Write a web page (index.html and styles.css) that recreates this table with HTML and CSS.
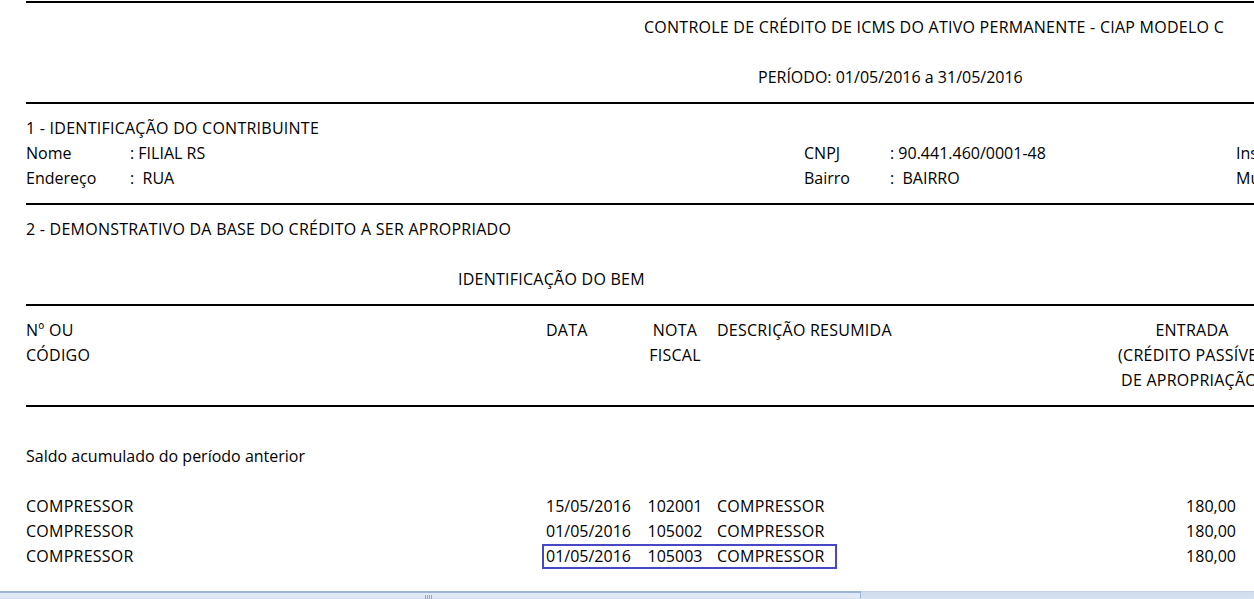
FILE: index.html
```html
<!DOCTYPE html>
<html lang="pt-BR">
<head>
    <meta charset="UTF-8">
    <title>CIAP Modelo C</title>
    <link rel="stylesheet" href="styles.css">
</head>
<body>
    <div class="viewport">
        <div class="report">
            <section class="band">
                <div class="row caps title">CONTROLE DE CRÉDITO DE ICMS DO ATIVO PERMANENTE - CIAP MODELO C</div>
                <div class="row"></div>
                <div class="row period">PERÍODO: 01/05/2016 a 31/05/2016</div>
            </section>

            <section class="band">
                <div class="row caps">1 - IDENTIFICAÇÃO DO CONTRIBUINTE</div>
                <div class="row ident">
                    <span>Nome</span>
                    <span>: FILIAL RS</span>
                    <span>CNPJ</span>
                    <span>: 90.441.460/0001-48</span>
                    <span>Inscrição Estadual</span>
                </div>
                <div class="row ident">
                    <span>Endereço</span>
                    <span>:&nbsp; RUA</span>
                    <span>Bairro</span>
                    <span>:&nbsp; BAIRRO</span>
                    <span>Município</span>
                </div>
            </section>

            <section class="band">
                <div class="row caps">2 - DEMONSTRATIVO DA BASE DO CRÉDITO A SER APROPRIADO</div>
                <div class="row"></div>
                <div class="row caps bem">IDENTIFICAÇÃO DO BEM</div>
            </section>

            <section class="band">
                <div class="head caps">
                    <div class="c-code">Nº OU<br>CÓDIGO</div>
                    <div class="c-date">DATA</div>
                    <div class="c-nota">NOTA<br>FISCAL</div>
                    <div class="c-desc">DESCRIÇÃO RESUMIDA</div>
                    <div class="c-gap"></div>
                    <div class="c-entrada">ENTRADA<br>(CRÉDITO PASSÍVEL<br>DE APROPRIAÇÃO)</div>
                </div>
            </section>

            <section class="band">
                <div class="row"></div>
                <div class="row">Saldo acumulado do período anterior</div>
                <div class="row"></div>

                <div class="row item">
                    <div class="c-code caps">COMPRESSOR</div>
                    <div class="cells">
                        <div class="c-date">15/05/2016</div>
                        <div class="c-nota">102001</div>
                        <div class="c-desc caps">COMPRESSOR</div>
                    </div>
                    <div class="c-gap"></div>
                    <div class="c-value">180,00</div>
                </div>
                <div class="row item">
                    <div class="c-code caps">COMPRESSOR</div>
                    <div class="cells">
                        <div class="c-date">01/05/2016</div>
                        <div class="c-nota">105002</div>
                        <div class="c-desc caps">COMPRESSOR</div>
                    </div>
                    <div class="c-gap"></div>
                    <div class="c-value">180,00</div>
                </div>
                <div class="row item">
                    <div class="c-code caps">COMPRESSOR</div>
                    <div class="cells selected">
                        <div class="c-date">01/05/2016</div>
                        <div class="c-nota">105003</div>
                        <div class="c-desc caps">COMPRESSOR</div>
                    </div>
                    <div class="c-gap"></div>
                    <div class="c-value">180,00</div>
                </div>
            </section>
        </div>
    </div>

    <div class="hscroll">
        <div class="thumb"><span class="grip"></span></div>
    </div>
</body>
</html>
```

FILE: styles.css
```css
:root {
    --ink: #000;
    --selection: #4848c6;
    --bar-edge: #9cb5d6;
    --thumb-bg: #dfe8f4;
    --track-bg: #cfdcec;
}

* {
    margin: 0;
    padding: 0;
    box-sizing: border-box;
}

html, body {
    height: 100%;
}

body {
    display: flex;
    flex-direction: column;
    background: #fff;
    color: var(--ink);
    font-family: 'Open Sans', 'Noto Sans', sans-serif;
    font-size: 16px;
    overflow: hidden;
}

.viewport {
    flex: 1;
    overflow: hidden;
}

.report {
    width: 1500px;
    padding: 1px 0 0 26px;
}

.band {
    border-top: 2px solid var(--ink);
    padding: 12px 0;
}

.row {
    height: 25px;
    line-height: 25px;
    white-space: nowrap;
}

.caps {
    letter-spacing: 0.25px;
}

.title {
    padding-left: 618px;
}

.period {
    padding-left: 732px;
}

.bem {
    padding-left: 432px;
}

/* identificacao */
.ident {
    display: grid;
    grid-template-columns: 104px 674px 86px 346px auto;
}

/* tabela */
.head {
    display: flex;
    line-height: 25px;
    white-space: nowrap;
}

.item {
    display: flex;
}

.cells {
    display: flex;
    width: 295px;
}

.cells.selected {
    outline: 2px solid var(--selection);
    outline-offset: -2px;
}

.c-code {
    width: 516px;
}

.c-date {
    width: 98px;
    padding-left: 4px;
}

.c-nota {
    width: 70px;
    text-align: center;
}

.c-desc {
    width: 127px;
    padding-left: 7px;
}

.head .c-desc {
    width: 396px;
}

.c-gap {
    width: 269px;
}

.head .c-gap {
    display: none;
}

.c-entrada {
    width: 172px;
    text-align: center;
}

.c-value {
    width: 172px;
    padding-right: 42px;
    text-align: right;
}

/* barra de rolagem */
.hscroll {
    height: 8px;
    flex: none;
    background: linear-gradient(var(--track-bg), #d6e2f0);
    border-top: 1px solid #c4d3e6;
}

.thumb {
    width: 861px;
    height: 100%;
    margin-top: -1px;
    background: var(--thumb-bg);
    border-top: 2px solid var(--bar-edge);
    border-right: 1px solid var(--bar-edge);
    position: relative;
}

.grip {
    position: absolute;
    left: 425px;
    top: 2px;
    width: 7px;
    height: 4px;
    background: repeating-linear-gradient(90deg, #8ea6c8 0 1px, transparent 1px 2px);
}
```
